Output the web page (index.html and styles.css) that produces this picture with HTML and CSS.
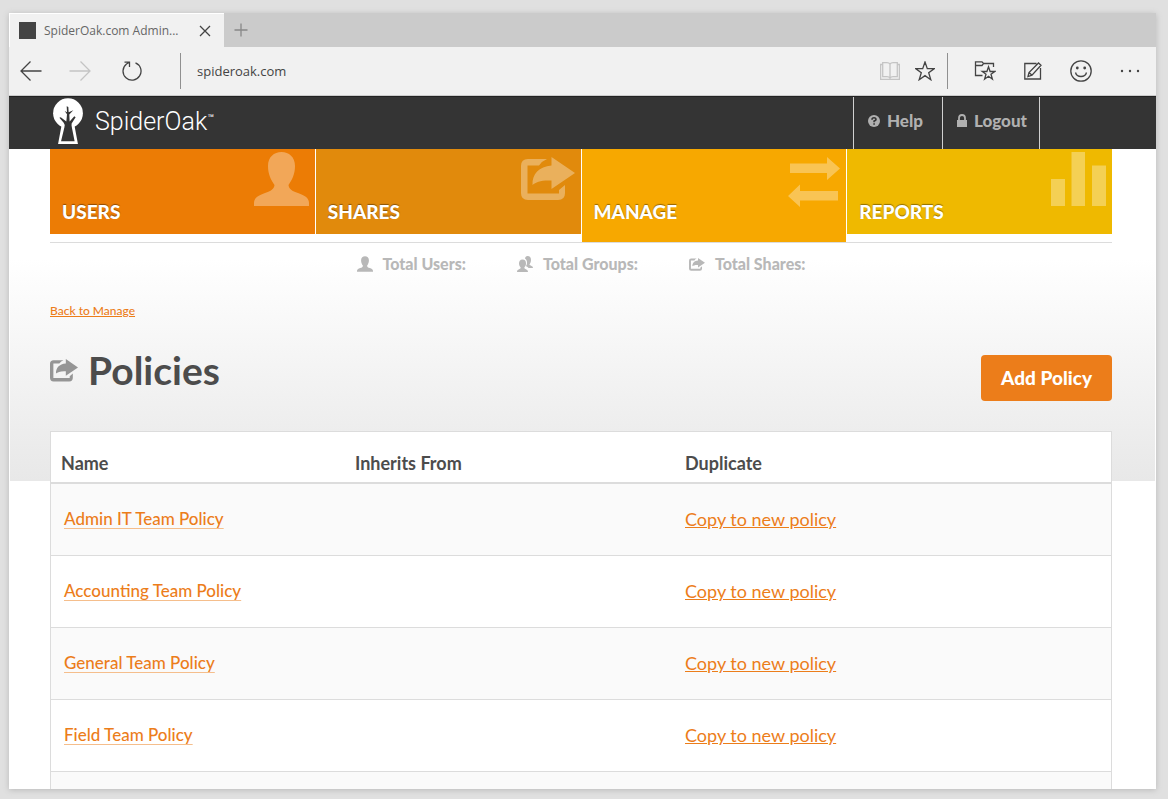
FILE: index.html
```html
<!DOCTYPE html>
<html lang="en">
<head>
<meta charset="utf-8">
<title>SpiderOak.com Admin</title>
<link rel="stylesheet" href="styles.css">
</head>
<body>
<svg class="defs" aria-hidden="true">
  <symbol id="share" viewBox="0 0 54 44"><path d="M26 2H7Q0 2 0 9V36Q0 43 7 43H37Q44 43 44 36V28l-6 5V36.500H6.500V8.500H18Q21 4 26 2zM30.500 0 54 16 30.500 32V23.500C20 23 15 25 11.500 28C11 17 18 9.500 30.500 8.500z"/></symbol>
  <symbol id="user" viewBox="0 0 55 54"><path d="M27.500 0C35 0 41 5 41 14C41 22 38 28 34.500 33C35 37 38 39 44 41C51 43.500 55 46 55 51V54H0V51C0 46 4 43.500 11 41C17 39 20 37 20.500 33C17 28 14 22 14 14C14 5 20 0 27.500 0Z"/></symbol>
</svg>
<div class="window">
  <div class="tabs">
    <div class="tab">
      <span class="favicon"></span>
      <span class="tab-title">SpiderOak.com Admin...</span>
      <button class="tab-close" aria-label="Close tab"><svg width="12" height="12" viewBox="0 0 12 12"><path d="M1 1 11 11M11 1 1 11"/></svg></button>
    </div>
    <button class="tab-new" aria-label="New tab"><svg width="14" height="14" viewBox="0 0 14 14"><path d="M7 0.500V13.500M0.500 7H13.500"/></svg></button>
  </div>
  <div class="toolbar">
    <button aria-label="Back"><svg width="22" height="20" viewBox="0 0 22 20"><path d="M21.500 10H1M10.500 0.500 1 10 10.500 19.500"/></svg></button>
    <button class="faded" aria-label="Forward"><svg width="22" height="20" viewBox="0 0 22 20"><path d="M0.500 10H21M11.500 0.500 21 10 11.500 19.500"/></svg></button>
    <button class="reload" aria-label="Reload"><svg width="20" height="20" viewBox="0 0 20 20"><path d="M13.500 1.800A9 9 0 1 1 4.500 3L7 1.500M2.500 1.200H7.500V6"/></svg></button>
    <span class="rule"></span>
    <input class="address" type="text" value="spideroak.com" aria-label="Address">
    <button class="faded" aria-label="Reading view"><svg width="20" height="18" viewBox="0 0 20 18"><path d="M10 2V16M10 2Q9 .7 7 .7H2.700V14.700H7Q9 14.700 10 16Q11 14.700 13 14.700H17.300V.7H13Q11 .7 10 2M2.700 2.500H.6V17.300H19.400V2.500H17.300"/></svg></button>
    <button aria-label="Add to favourites"><svg width="20" height="20" viewBox="0 0 20 20"><path d="M10 1 12.300 7.600H19.300L13.700 11.800 15.800 18.700 10 14.600 4.200 18.700 6.300 11.800.7 7.600H7.700Z"/></svg></button>
    <span class="rule"></span>
    <button class="wide" aria-label="Favourites"><svg width="22" height="20" viewBox="0 0 22 20"><path d="M8.500 14.500H1.500V.8H8L9.500 2.500H19.500V6M1.500 4.500H8L9.500 2.500M14.500 5.800 16.100 10.500H20.800L17 13.300 18.400 18.200 14.500 15.300 10.600 18.200 12 13.300 8.200 10.500H12.900Z"/></svg></button>
    <button class="wide" aria-label="Make a web note"><svg width="18" height="18" viewBox="0 0 18 18"><path d="M12.500 1.500H.8V17H16.500V6M4 14.500 5 10.500 14.500 1 17 3.300 8 13.200ZM5 10.500 8 13.200"/></svg></button>
    <button class="wide" aria-label="Feedback"><svg width="22" height="22" viewBox="0 0 22 22"><circle cx="11" cy="11" r="10.200"/><path d="M5.500 12.500Q6.500 16.500 11 16.500T16.500 12.500"/><g class="dots"><circle cx="7.300" cy="8" r="1.400"/><circle cx="14.700" cy="8" r="1.400"/></g></svg></button>
    <button class="wide" aria-label="More"><svg width="20" height="4" viewBox="0 0 20 4"><g class="dots"><circle cx="2" cy="2" r="1.200"/><circle cx="10" cy="2" r="1.200"/><circle cx="18" cy="2" r="1.200"/></g></svg></button>
  </div>
  <header class="header">
    <a class="logo" href="#">
      <svg width="34" height="48" viewBox="0 0 100 145"><circle cx="50" cy="49" r="45" fill="#fff"/><path d="M32 78 20 142H80L68 78Z" fill="#fff"/><path d="M39 92Q42 84 37 78L24 63 28 61 45 74 47 52 40 42 47 46 46 28 51 30 52 46 66 40 54 53 55 74 69 58 73 61 61 80Q60 85 62 94L70 134H29Z" fill="#343434"/></svg>
      <span>SpiderOak<sup>™</sup></span>
    </a>
    <nav class="account">
      <a href="#"><svg width="12" height="12" viewBox="0 0 12 12"><circle cx="6" cy="6" r="6" fill="#b0b0b0"/><path d="M4 4.700Q4 2.800 6 2.800T8 4.500Q8 5.500 6.100 6V7.200M6.100 8.200V9.700" fill="none" stroke="#343434" stroke-width="1.600"/></svg>Help</a>
      <a href="#"><svg width="10" height="13" viewBox="0 0 10 13"><path d="M0 6H10V13H0Z" fill="#b0b0b0"/><path d="M2 7V4Q2 1 5 1T8 4V7" fill="none" stroke="#b0b0b0" stroke-width="1.800"/></svg>Logout</a>
    </nav>
  </header>
  <main class="page">
    <nav class="tiles">
      <a class="tile users" href="#"><span>USERS</span><svg width="55" height="54"><use href="#user"/></svg></a>
      <a class="tile shares" href="#"><span>SHARES</span><svg class="low" width="54" height="44"><use href="#share"/></svg></a>
      <a class="tile manage" href="#"><span>MANAGE</span><svg class="low" width="52" height="50" viewBox="0 0 52 50"><path d="M2 6.500H39V0L52 11.500 39 23V16H2ZM50 43.500H12V50L0 39 12 27.500V34H50Z"/></svg></a>
      <a class="tile reports" href="#"><span>REPORTS</span><svg width="55" height="54" viewBox="0 0 55 54"><path d="M0 27H14V54H0ZM20.500 0H34V54H20.500ZM41 13.500H55V54H41Z"/></svg></a>
    </nav>
    <ul class="totals">
      <li><svg width="16" height="16"><use href="#user"/></svg>Total Users:</li>
      <li><svg width="16" height="16" viewBox="0 0 16 16"><path d="M10.500 0C12.800 0 14 1.600 14 4S13 7.500 12.500 8.500C13 10 16 9.500 16 12H11.500C10.800 11 9.500 10.500 9 10C10.500 8 10.500 4 8 2.500C8.300 1 9 0 10.500 0ZM5.500 3.500C8 3.500 9 5 9 7.500S8 10.500 7.300 11.500C7.500 13.500 11 13 11 16H0C0 13 3.500 13.500 3.700 11.500C3 10.500 2 9.500 2 7.500S3 3.500 5.500 3.500Z"/></svg>Total Groups:</li>
      <li><svg width="16" height="13"><use href="#share"/></svg>Total Shares:</li>
    </ul>
    <a class="back" href="#">Back to Manage</a>
    <div class="heading">
      <h1><svg width="28" height="23"><use href="#share"/></svg>Policies</h1>
      <button class="add">Add Policy</button>
    </div>
    <table class="policies">
      <thead><tr><th class="name">Name</th><th class="inherits">Inherits From</th><th>Duplicate</th></tr></thead>
      <tbody>
        <tr><td class="name"><a href="#">Admin IT Team Policy</a></td><td></td><td><a href="#">Copy to new policy</a></td></tr>
        <tr><td class="name"><a href="#">Accounting Team Policy</a></td><td></td><td><a href="#">Copy to new policy</a></td></tr>
        <tr><td class="name"><a href="#">General Team Policy</a></td><td></td><td><a href="#">Copy to new policy</a></td></tr>
        <tr><td class="name"><a href="#">Field Team Policy</a></td><td></td><td><a href="#">Copy to new policy</a></td></tr>
        <tr><td></td><td></td><td></td></tr>
      </tbody>
    </table>
  </main>
</div>
</body>
</html>
```
FILE: styles.css
```css
* { box-sizing: border-box; }
body {
  margin: 0;
  height: 100vh;
  padding: 13px 12px 10px 9px;
  background: #e0e0e0;
  font-family: Lato, sans-serif;
  color: #4c4c4c;
}
a { color: #ec7d1a; }
button { border: 0; padding: 0; background: none; font: inherit; }
svg { flex: none; display: block; }
.defs { position: absolute; width: 0; height: 0; }

.window {
  height: 100%;
  display: flex;
  flex-direction: column;
  overflow: hidden;
  background: #fff;
  box-shadow: 0 1px 6px #b8b8b8;
}

/* Browser chrome */
.tabs { flex: none; height: 34px; display: flex; background: #cbcbcb; }
.tab {
  width: 215px;
  display: flex;
  align-items: center;
  padding: 0 13px 0 9px;
  background: #f1f1f1;
  border-top: 1px solid #fff;
  border-left: 1px solid #fff;
}
.favicon { width: 17px; height: 17px; margin-right: 8px; background: #444; }
.tab-title { flex: 1; font: 12px "Open Sans", sans-serif; color: #666; white-space: nowrap; }
.tabs svg, .toolbar svg { fill: none; stroke: #444; stroke-width: 1.3; }
.tab-new { padding: 0 10px; }
.tabs .tab-new svg { stroke: #888; }
.toolbar {
  flex: none;
  height: 49px;
  display: flex;
  align-items: center;
  padding: 0 16px 0 11px;
  background: #f1f1f1;
  border-bottom: 1px solid #ccc;
}
.toolbar button + button { margin-left: 27px; }
.toolbar .reload { margin: 0 38px 0 31px; }
.toolbar .faded svg { stroke: #c4c4c4; }
.toolbar .dots { fill: #444; stroke: none; }
.rule { width: 1px; height: 36px; background: #909090; }
.address {
  flex: 1;
  min-width: 0;
  border: 0;
  padding: 0 16px;
  background: none;
  font: 13px "Open Sans", sans-serif;
  color: #444;
}
.toolbar .faded + button { margin-left: 15px; }
.toolbar .faded + .reload { margin-left: 31px; }
.toolbar button + .rule { margin-left: 12px; }
.toolbar .reload + .rule { margin-left: 0; }
.toolbar .rule + .wide { margin-left: 26px; }
.toolbar .wide + .wide { margin-left: 28px; }

/* Site header */
.header {
  flex: none;
  height: 53px;
  display: flex;
  justify-content: space-between;
  padding: 0 116px 0 42px;
  background: #343434;
  border-top: 1px solid #222;
}
.logo { display: flex; gap: 10px; color: #fff; text-decoration: none; font: 300 25px/50px Roboto, sans-serif; }
.logo sup { font-size: 11px; font-weight: 400; line-height: 11px; vertical-align: 8px; }
.account { display: flex; border-right: 1px solid #d0d0d0; }
.account a {
  display: flex;
  align-items: center;
  gap: 7px;
  padding: 0 12px 5px 14px;
  border-left: 1px solid #d0d0d0;
  color: #b0b0b0;
  font-size: 17px;
  font-weight: 900;
  text-decoration: none;
}
.account a:first-child { padding-right: 19px; }

/* Page */
.page {
  flex: 1;
  min-height: 0;
  overflow: hidden;
  padding: 0 43px 0 40px;
  background: linear-gradient(#fff 110px, #e8e8e8 332px, #fff 332px);
  border: solid #fff;
  border-width: 0 1px;
}
.tiles {
  height: 94px;
  display: grid;
  grid-template-columns: repeat(4, 1fr);
  align-items: start;
  gap: 1px;
  border-bottom: 1px solid #dcdcdc;
}
.tile {
  height: 85px;
  display: flex;
  justify-content: space-between;
  padding: 3px 6px 0 12px;
  color: #fff;
  font-size: 19px;
  font-weight: 900;
  line-height: 24px;
  text-decoration: none;
  text-shadow: 0 -1px 1px #0006;
}
.tile span { padding-top: 48px; }
.tile svg { fill: #fff; opacity: .33; }
.tile .low { margin-top: 5px; }
.users { background: #ec7c05; }
.shares { background: #e18a0c; }
.manage { height: 93px; background: #f7a800; }
.reports { background: #efb900; }
.totals {
  display: flex;
  justify-content: center;
  gap: 51px;
  margin: 0;
  padding: 9px 0 0;
  list-style: none;
  font-size: 16px;
  font-weight: 900;
  line-height: 24px;
  color: #b8b8b8;
}
.totals li { display: flex; align-items: center; gap: 10px; }
.totals svg, h1 svg { fill: currentColor; }
.back { display: block; width: fit-content; margin-top: 26px; font-size: 12px; line-height: 18px; font-weight: 500; }
.heading { display: flex; justify-content: space-between; margin: 35px 0 30px; }
h1 { display: flex; align-items: center; gap: 10px; height: 30px; margin: 0; font-size: 39px; line-height: 30px; }
h1 svg { color: #959595; }
.add {
  height: 46px;
  padding: 0 20px 2px;
  border-radius: 4px;
  background: #ec7d1a;
  color: #fff;
  font-size: 19px;
  font-weight: 900;
}

.policies {
  width: 100%;
  border-collapse: separate;
  border-spacing: 0;
  border: 1px solid #dcdcdc;
  background: #fff;
  table-layout: fixed;
  text-align: left;
  font-size: 18px;
}
.policies th { height: 52px; padding: 12px 10px 0; border-bottom: 2px solid #dcdcdc; }
th.name { width: 294px; }
th.inherits { width: 330px; }
.policies td { height: 72px; padding: 0 10px 2px; border-bottom: 1px solid #dcdcdc; }
.policies tr:nth-child(odd) td { background: #fafafa; }
.policies td.name { padding-left: 13px; font-size: 17px; font-weight: 500; }
.name a { text-decoration-color: #f5be8c; text-underline-offset: 3px; text-decoration-thickness: 1px; }
```
